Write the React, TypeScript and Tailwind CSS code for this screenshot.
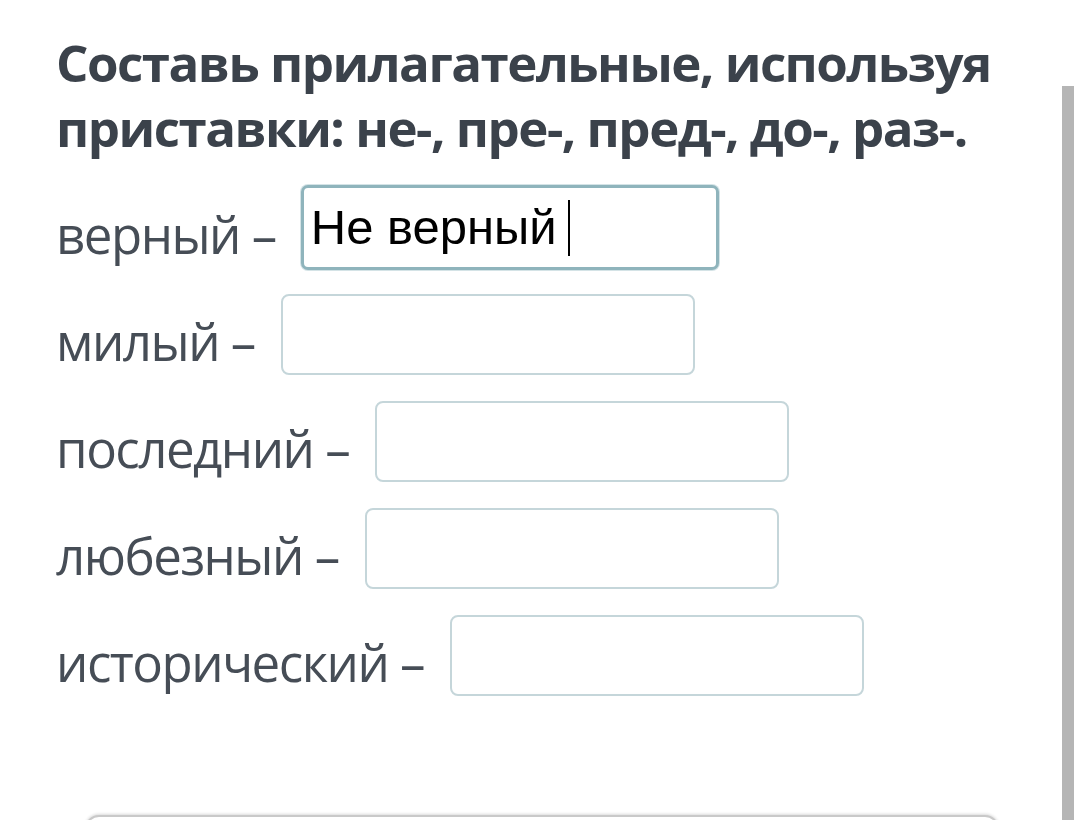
const ROWS = [
  { label: "верный –", value: "Не верный", focused: true },
  { label: "милый –", value: "" },
  { label: "последний –", value: "" },
  { label: "любезный –", value: "" },
  { label: "исторический –", value: "" },
];

export default function App() {
  return (
    <div className="relative h-[820px] w-[1080px] overflow-hidden bg-white">
      <div className="pl-[56px] pt-[30px]">
        <h1 className="text-[51px] leading-[65px] font-bold tracking-[-1.5px] text-[#3b424b] [font-family:'Open_Sans',sans-serif]">
          <div>Составь прилагательные, используя</div>
          <div>приставки: не-, пре-, пред-, до-, раз-.</div>
        </h1>

        <div className="mt-[27px] flex flex-col gap-[26px]">
          {ROWS.map((r) => (
            <div key={r.label} className="flex h-[81px] items-center">
              <span className="pt-[14px] text-[51px] leading-[81px] tracking-[-1.5px] text-[#464d56] whitespace-nowrap [font-family:'Open_Sans',sans-serif]">
                {r.label}
              </span>
              {r.focused ? (
                <div className="ml-[25px] -my-[2px] flex h-[85px] w-[418px] items-center rounded-[7px] border-[3px] border-[#8fb4bc] bg-white pl-[7px] shadow-[0_0_0_1px_#d4e3e6]">
                  <span className="text-[49px] text-black [font-family:'Liberation_Sans',Arial,sans-serif]">
                    {r.value}
                  </span>
                  <span className="ml-[11px] h-[56px] w-[2px] bg-black" />
                </div>
              ) : (
                <div className="ml-[26px] h-[81px] w-[414px] rounded-[8px] border-2 border-[#c5d6da] bg-white" />
              )}
            </div>
          ))}
        </div>
      </div>

      {/* bottom card peeking in */}
      <div className="absolute left-[85px] top-[815px] h-[40px] w-[914px] rounded-t-[14px] border-2 border-[#c9c9c9] bg-white shadow-[0_-1px_3px_rgba(0,0,0,0.15)]" />

      {/* scrollbar */}
      <div className="absolute right-[6px] top-[86px] bottom-0 w-[12px] bg-[#b5b5b5]" />
    </div>
  );
}
